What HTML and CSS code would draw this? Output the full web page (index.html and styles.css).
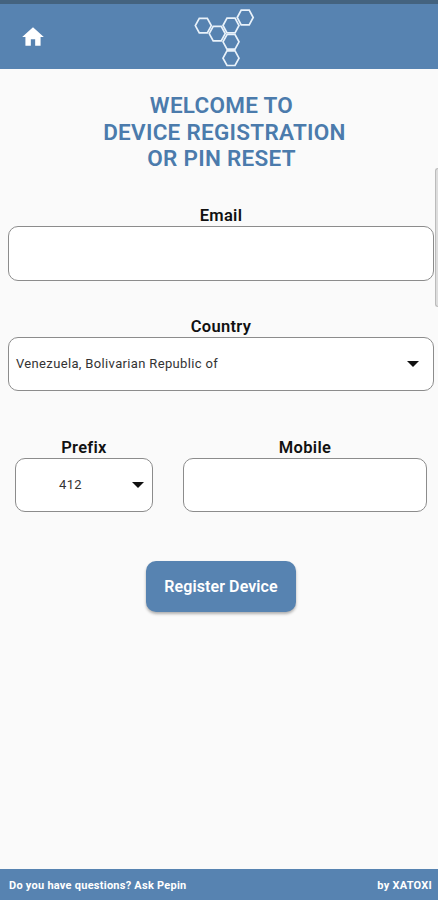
FILE: index.html
```html
<!DOCTYPE html>
<html lang="en">
<head>
  <meta charset="UTF-8">
  <meta name="viewport" content="width=device-width, initial-scale=1.0">
  <title>Device Registration</title>
  <link rel="stylesheet" href="styles.css">
</head>
<body>
  <div id="root">
    <header class="header">
      <a class="home" href="#" aria-label="Home">
        <svg width="24" height="24" viewBox="0 0 24 24"><path fill="#fff" d="M10 20v-6h4v6h5v-8h3L12 3 2 12h3v8z"/></svg>
      </a>
      <svg class="logo" width="62" height="60" viewBox="193 8 62 60">
        <defs>
          <path id="hex" d="M-8 0L-4-7.3H4L8 0L4 7.3H-4Z"/>
        </defs>
        <use href="#hex" x="203.3" y="25.6"/>
        <use href="#hex" x="217.2" y="33.6"/>
        <use href="#hex" x="231" y="25.5"/>
        <use href="#hex" x="245.2" y="17.5"/>
        <use href="#hex" x="231" y="41.8"/>
        <use href="#hex" x="231" y="58.2"/>
      </svg>
    </header>

    <main class="main">
      <h1 class="title">WELCOME TO<br>&nbsp;DEVICE REGISTRATION<br>OR PIN RESET</h1>

      <div class="field email">
        <label for="email">Email</label>
        <input class="box" id="email" type="text">
      </div>

      <div class="field country">
        <span class="label">Country</span>
        <div class="box select">
          <span class="value">Venezuela, Bolivarian Republic of</span>
          <span class="arrow"></span>
        </div>
      </div>

      <div class="row">
        <div class="field prefix">
          <span class="label">Prefix</span>
          <div class="box select">
            <span class="value">412</span>
            <span class="arrow"></span>
          </div>
        </div>
        <div class="field mobile">
          <label for="mobile">Mobile</label>
          <input class="box" id="mobile" type="text">
        </div>
      </div>

      <button class="register">Register Device</button>
    </main>

    <footer class="footer">
      <span>Do you have questions? Ask Pepin</span>
      <span class="by">by XATOXI</span>
    </footer>

    <div class="scrollbar"></div>
  </div>
</body>
</html>
```
FILE: styles.css
```css
*{margin: 0; padding: 0; box-sizing: border-box;}

body{
  font-family: Roboto, "Liberation Sans", sans-serif;
  background-color: #fafafa;
}

#root{
  position: relative;
  height: 900px;
  display: flex;
  flex-direction: column;
  overflow: hidden;
}

.header{
  height: 69px;
  border-top: 4px solid #44637f;
  background-color: #5783b1;
  display: flex;
  align-items: flex-start;
  flex-shrink: 0;
}

.home{
  width: 26px;
  height: 26px;
  margin: 20px 0 0 20px;
}

.home svg{
  width: 26px;
  height: 26px;
}

.logo{
  margin: 4px 0 0 147px;
  fill: none;
  stroke: #e9f2fa;
  stroke-width: 1.7;
}

.main{
  flex: 1;
  display: flex;
  flex-direction: column;
}

.title{
  margin-top: 23px;
  padding-left: 5px;
  text-align: center;
  font-size: 22.5px;
  font-weight: 600;
  line-height: 26.5px;
  letter-spacing: 0.27px;
  color: #4b7bac;
}

.field{
  display: flex;
  flex-direction: column;
}

.field label,
.label{
  height: 20px;
  line-height: 20px;
  text-align: center;
  font-size: 16.5px;
  font-weight: 600;
  letter-spacing: 0.3px;
  color: #111;
}

.box{
  width: 100%;
  height: 54px;
  border: 1px solid #8c8c8c;
  border-radius: 10px;
  background-color: #fff;
}

.email{
  margin: 34.5px 4px 0 8px;
}

.email .box{
  height: 55px;
}

.country{
  margin: 36px 4px 0 8px;
}

.select{
  display: flex;
  align-items: center;
  justify-content: space-between;
}

.value{
  padding-bottom: 2px;
  font-size: 13px;
  letter-spacing: 0.35px;
  color: #333;
}

.country .select{
  padding: 0 14px 0 7px;
}

.arrow{
  border: 6px solid transparent;
  border-top-color: #111;
  border-bottom: 0;
}

.row{
  display: flex;
  gap: 30px;
  margin: 47px 11px 0 15px;
}

.prefix{
  width: 138px;
}

.prefix .select{
  padding: 0 8px 0 43px;
}

.mobile{
  flex: 1;
}

.register{
  width: 150px;
  height: 51px;
  margin: 49px 0 0 146px;
  border: 0;
  border-radius: 10px;
  background-color: #5783b1;
  box-shadow: 0 2px 3px rgba(0, 0, 0, 0.3);
  font-family: inherit;
  font-size: 16px;
  font-weight: 600;
  letter-spacing: 0.1px;
  color: #fff;
}

.footer{
  height: 31px;
  padding: 2px 6px 0 9px;
  background-color: #5783b1;
  display: flex;
  align-items: center;
  justify-content: space-between;
  flex-shrink: 0;
  font-size: 11px;
  font-weight: 700;
  letter-spacing: 0.25px;
  color: #fff;
}

.scrollbar{
  position: absolute;
  top: 168px;
  right: 0;
  width: 3px;
  height: 139px;
  border: 1px solid #bbb;
  border-right: 0;
  border-radius: 3px 0 0 3px;
  background-color: #ddd;
}
```
